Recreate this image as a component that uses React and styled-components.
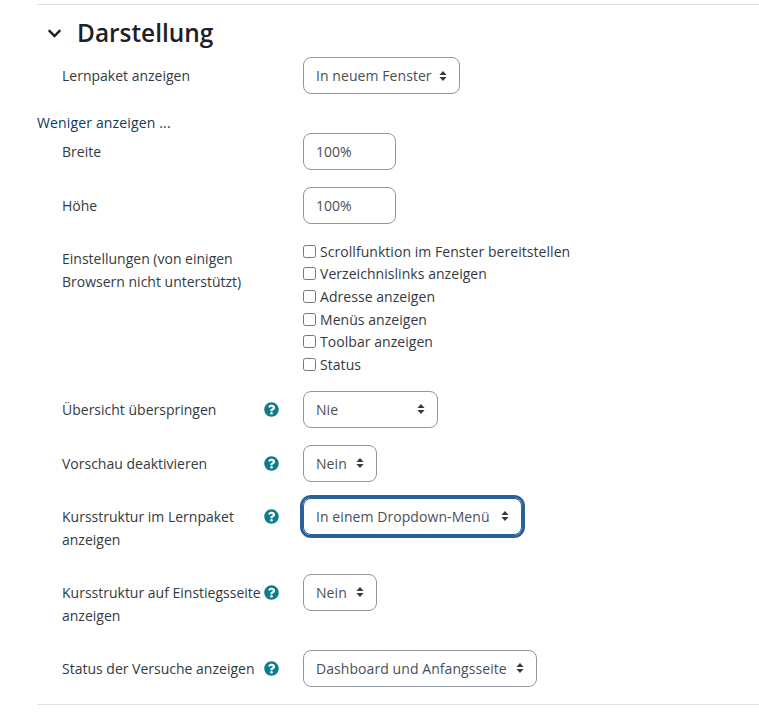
import React from "react";
import styled, { createGlobalStyle } from "styled-components";
import { FaChevronDown, FaQuestionCircle } from "react-icons/fa";

const GlobalStyle = createGlobalStyle`
  html, body {
    margin: 0;
    padding: 0;
    background: #fff;
    overflow: hidden;
  }
  body {
    font-family: "Open Sans", "Noto Sans", sans-serif;
    font-size: 14px;
    color: #343a40;
  }
`;

const Page = styled.div`
  padding: 4px 0 0 37px;
  height: 709px;
`;

const Section = styled.section`
  border-top: 1px solid #dee2e6;
  border-bottom: 1px solid #dee2e6;
  height: 701px;
  box-sizing: border-box;
`;

const Heading = styled.h3`
  display: flex;
  align-items: center;
  gap: 15px;
  box-sizing: border-box;
  margin: 0;
  padding: 16px 0 0 10px;
  height: 40px;
  font-size: 24.4px;
  font-weight: 600;
  line-height: 32px;
  color: #1d2125;
`;

const Chevron = styled(FaChevronDown)`
  width: 15px;
  height: 15px;
  color: #1d2125;
`;

const Row = styled.div`
  display: grid;
  grid-template-columns: 241px auto;
  padding-left: 25px;
  margin-top: ${({ $top }) => $top}px;
`;

const LabelCell = styled.div`
  display: flex;
  justify-content: space-between;
  padding: 7px 24px 0 0;
`;

const Label = styled.label`
  line-height: 23px;
  color: #343a40;
`;

const HelpIcon = styled(FaQuestionCircle)`
  flex: none;
  width: 15px;
  height: 15px;
  margin-top: 4px;
  color: #0f7c8c;
`;

const Select = styled.div`
  display: inline-flex;
  align-items: center;
  justify-content: space-between;
  justify-self: start;
  box-sizing: border-box;
  width: ${({ $width }) => $width}px;
  height: 37px;
  padding: 0 12px;
  border: 1px solid #8f959e;
  border-radius: 8px;
  color: #495057;
  letter-spacing: 0.07px;
  white-space: nowrap;
  ${({ $focused }) => $focused && "box-shadow: 0 0 0 3px #2b6098; border-color: #2b6098;"}
`;

const Input = styled.div`
  display: flex;
  align-items: center;
  box-sizing: border-box;
  width: 93px;
  height: 37px;
  padding: 0 12px;
  border: 1px solid #8f959e;
  border-radius: 8px;
  color: #495057;
`;

const ShowLess = styled.a`
  display: block;
  margin-top: 19px;
  line-height: 20px;
  letter-spacing: 0.15px;
  color: #0f3a5c;
`;

const CheckList = styled.div`
  display: flex;
  flex-direction: column;
`;

const CheckRow = styled.label`
  display: flex;
  align-items: center;
  gap: 4px;
  height: 22.6px;
  letter-spacing: 0.05px;
  color: #343a40;
  white-space: nowrap;
`;

const CheckBox = styled.span`
  box-sizing: border-box;
  width: 13px;
  height: 13px;
  border: 1px solid #767676;
  border-radius: 2.5px;
  background: #fff;
`;

const CaretSvg = styled.svg`
  flex: none;
  width: 8px;
  height: 12px;
  color: #343a40;
`;

const Caret = () => (
  <CaretSvg viewBox="0 0 8 12">
    <path d="M4 1 L7.6 5 H0.4 Z M4 11 L0.4 7 H7.6 Z" fill="currentColor" />
  </CaretSvg>
);

const SelectField = ({ children, width, focused }) => (
  <Select $width={width} $focused={focused}>
    {children}
    <Caret />
  </Select>
);

const checks = [
  "Scrollfunktion im Fenster bereitstellen",
  "Verzeichnislinks anzeigen",
  "Adresse anzeigen",
  "Menüs anzeigen",
  "Toolbar anzeigen",
  "Status",
];

export default function App() {
  return (
    <Page>
      <GlobalStyle />
      <Section>
        <Heading>
          <Chevron />
          Darstellung
        </Heading>
        <Row $top={12}>
          <LabelCell>
            <Label>Lernpaket anzeigen</Label>
          </LabelCell>
          <SelectField width={157}>In neuem Fenster</SelectField>
        </Row>
        <ShowLess>Weniger anzeigen ...</ShowLess>
        <Row $top={0}>
          <LabelCell>
            <Label>Breite</Label>
          </LabelCell>
          <Input>100%</Input>
        </Row>
        <Row $top={17}>
          <LabelCell>
            <Label>Höhe</Label>
          </LabelCell>
          <Input>100%</Input>
        </Row>
        <Row $top={16}>
          <LabelCell>
            <Label>
              Einstellungen (von einigen
              <br />
              Browsern nicht unterstützt)
            </Label>
          </LabelCell>
          <CheckList>
            {checks.map((item) => (
              <CheckRow key={item}>
                <CheckBox />
                {item}
              </CheckRow>
            ))}
          </CheckList>
        </Row>
        <Row $top={15}>
          <LabelCell>
            <Label>Übersicht überspringen</Label>
            <HelpIcon />
          </LabelCell>
          <SelectField width={135}>Nie</SelectField>
        </Row>
        <Row $top={17}>
          <LabelCell>
            <Label>Vorschau deaktivieren</Label>
            <HelpIcon />
          </LabelCell>
          <SelectField width={74}>Nein</SelectField>
        </Row>
        <Row $top={16}>
          <LabelCell>
            <Label>
              Kursstruktur im Lernpaket
              <br />
              anzeigen
            </Label>
            <HelpIcon />
          </LabelCell>
          <SelectField width={219} focused>
            In einem Dropdown-Menü
          </SelectField>
        </Row>
        <Row $top={23}>
          <LabelCell>
            <Label>
              Kursstruktur auf Einstiegsseite
              <br />
              anzeigen
            </Label>
            <HelpIcon />
          </LabelCell>
          <SelectField width={74}>Nein</SelectField>
        </Row>
        <Row $top={23}>
          <LabelCell>
            <Label>Status der Versuche anzeigen</Label>
            <HelpIcon />
          </LabelCell>
          <SelectField width={234}>Dashboard und Anfangsseite</SelectField>
        </Row>
      </Section>
    </Page>
  );
}
